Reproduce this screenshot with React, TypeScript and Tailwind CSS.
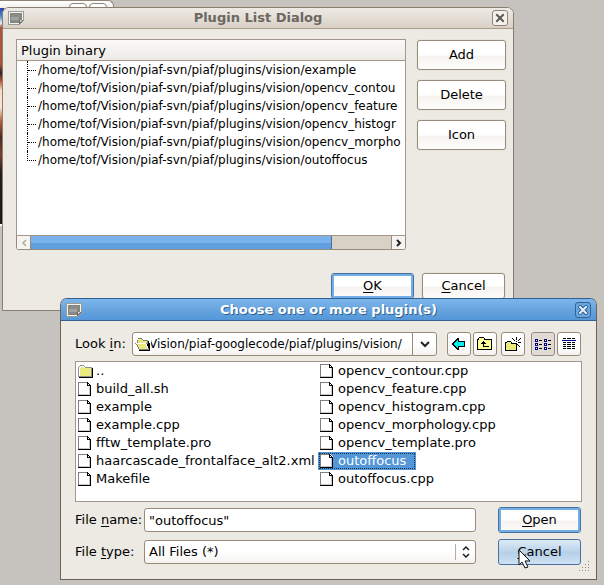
import type { ReactNode } from "react";

const plugins = [
  "example",
  "opencv_contou",
  "opencv_feature",
  "opencv_histogr",
  "opencv_morpho",
  "outoffocus",
];

const leftFiles = [
  "..",
  "build_all.sh",
  "example",
  "example.cpp",
  "fftw_template.pro",
  "haarcascade_frontalface_alt2.xml",
  "Makefile",
];

const rightFiles = [
  "opencv_contour.cpp",
  "opencv_feature.cpp",
  "opencv_histogram.cpp",
  "opencv_morphology.cpp",
  "opencv_template.pro",
  "outoffocus",
  "outoffocus.cpp",
];

function WindowIcon() {
  return (
    <svg width="16" height="14" viewBox="0 0 16 14" shapeRendering="crispEdges" className="shrink-0">
      <path d="M0 0H16V10H15V11H14V12H13V13H12V14H0Z" fill="#9c9a94" />
      <path d="M1 1H15V10H14V11H13V12H12V13H1Z" fill="#f4f4f0" />
      <path d="M2 2H14V9H11V12H2Z" fill="#83837f" />
      <path d="M3 3H13V6H3Z" fill="#8b8b87" />
      <path d="M3 6H11V9H3Z" fill="#a2a29e" />
      <path d="M3 9H10V11H3Z" fill="#8a8a86" />
      <path d="M11 9H15V10H14V11H13V12H12V13H11Z" fill="#6a6a64" />
      <path d="M12 9H14V10H13V11H12Z" fill="#d4d4d0" />
    </svg>
  );
}

function FileIcon() {
  return (
    <svg width="14" height="15" viewBox="0 0 14 15" shapeRendering="crispEdges" className="shrink-0">
      <path d="M1 0H10L13 3V14H1Z" fill="#fff" />
      <path d="M0 0H9V1H1V13H0Z" fill="#808080" />
      <path d="M9 0H10V1H11V2H12V3H13V14H0V13H12V4H9Z" fill="#000" />
      <path d="M10 2H11V3H10Z" fill="#fff" />
      <path d="M1 12H11V13H1ZM11 4H12V13H11Z" fill="#c8c8c8" />
    </svg>
  );
}

function FolderIcon() {
  return (
    <svg width="15" height="13" viewBox="0 0 15 13" shapeRendering="crispEdges" className="-mr-px shrink-0">
      <defs>
        <pattern id="folderDots" width="2" height="2" patternUnits="userSpaceOnUse">
          <rect width="2" height="2" fill="#dcdcdc" />
          <rect width="1" height="1" fill="#f8f820" />
          <rect x="1" y="1" width="1" height="1" fill="#f8f820" />
        </pattern>
      </defs>
      <path d="M2 0H6V1H7V2H14V12H0V2H1V1H2Z" fill="#909090" />
      <path d="M2 1H6V2H7V3H13V11H1V2H2Z" fill="#fff" />
      <path d="M3 2H6V3H13V11H2V3H3Z" fill="url(#folderDots)" />
      <path d="M14 3H15V13H1V12H14Z" fill="#000" />
    </svg>
  );
}

function OpenFolderIcon() {
  return (
    <svg width="16" height="13" viewBox="0 0 16 13" shapeRendering="crispEdges">
      <path d="M3 0H7V1H8V2H13V5H14V12H4V11H3V9H2V7H1V6H0V5H2V2H3Z" fill="#808080" />
      <path d="M3 1H7V2H8V3H12V5H3Z" fill="url(#folderDots)" />
      <path d="M1 5H11V6H12V8H13V11H4V9H3V7H2V6H1Z" fill="#fff" />
      <path d="M2 6H11V8H12V11H4V9H3V7H2Z" fill="url(#folderDots)" />
      <path d="M13 3H14V5H15V13H4V12H14V10H13V8H12V6H13Z" fill="#000" />
    </svg>
  );
}

function TitleBar({ title, active }: { title: string; active: boolean }) {
  return (
    <header
      className={
        active
          ? "flex h-[22px] items-center rounded-t-[6px] border-b border-[#33618f] bg-linear-to-b from-[#7db6ee] via-[#68a4de] via-50% to-[#5397d9] px-[5px]"
          : "flex h-[21px] items-center rounded-t-[6px] border-b border-[#a89c8a] bg-linear-to-b from-[#eeebe5] to-[#d8d0c5] px-[5px]"
      }
    >
      <WindowIcon />
      <h1
        className={
          active
            ? "flex-1 text-center text-[13px] leading-5 font-bold text-white [text-shadow:1px_1px_0_#33618f]"
            : "flex-1 text-center text-[13px] leading-5 font-bold text-[#6c6760]"
        }
      >
        {title}
      </h1>
      <button
        type="button"
        aria-label="Close"
        className={
          active
            ? "flex size-4 items-center justify-center rounded-[3px] border border-[#33618f] bg-[#69a6e2]"
            : "flex size-4 items-center justify-center rounded-[3px] border border-[#8f8576] bg-[#f4f2ee]"
        }
      >
        <svg width="10" height="10" viewBox="0 0 10 10">
          {active && <path d="M2 2L8 8M8 2L2 8" stroke="#2f5c8a" strokeWidth="4" strokeLinecap="square" />}
          <path
            d="M2 2L8 8M8 2L2 8"
            stroke={active ? "#e6f1fc" : "#5c5850"}
            strokeWidth="2"
            strokeLinecap="square"
          />
        </svg>
      </button>
    </header>
  );
}

function PushButton({
  children,
  tone = "normal",
  className = "",
}: {
  children: ReactNode;
  tone?: "normal" | "default" | "hover";
  className?: string;
}) {
  const tones = {
    normal:
      "border-[#978c7c] bg-linear-to-b from-white from-50% via-[#f5f3f0] via-55% to-[#fdfdfc] shadow-[0_0_1px_#b8afa2]",
    default:
      "border-[#48719c] bg-linear-to-b from-white from-50% via-[#f5f3f0] via-55% to-[#fdfdfc] shadow-[inset_0_0_0_2px_#72aeeb]",
    hover: "border-[#48719c] bg-linear-to-b from-[#dfebf6] from-0% via-[#b5d0e9] via-55% to-[#cfe2f3]",
  };
  return (
    <button type="button" className={`rounded-[3px] border text-center text-[13px] ${tones[tone]} ${className}`}>
      {children}
    </button>
  );
}

function Key({ children }: { children: ReactNode }) {
  return <u className="decoration-1 underline-offset-2">{children}</u>;
}

function ToolButton({ label, pressed, children }: { label: string; pressed?: boolean; children: ReactNode }) {
  return (
    <button
      type="button"
      aria-label={label}
      className={
        pressed
          ? "flex size-6 items-center justify-center rounded-[3px] border border-[#978c7c] bg-[#e0dad2]"
          : "flex size-6 items-center justify-center rounded-[3px] border border-[#978c7c] bg-linear-to-b from-white from-50% to-[#f5f3f0]"
      }
    >
      {children}
    </button>
  );
}

function BackIcon() {
  return (
    <svg width="14" height="12" viewBox="0 0 14 12" shapeRendering="crispEdges">
      <path d="M5 0H7V3H13V9H7V12H5V11H4V10H3V9H2V8H1V7H0V5H1V4H2V3H3V2H4V1H5Z" fill="#000" />
      <path d="M5 2H6V4H12V8H6V10H5V9H4V8H3V7H2V5H3V4H4V3H5Z" fill="#00f0f0" />
    </svg>
  );
}

function ParentIcon() {
  return (
    <svg width="16" height="14" viewBox="0 0 16 14" shapeRendering="crispEdges">
      <path d="M2 0H7V1H8V2H15V13H0V2H1V1H2Z" fill="#000" />
      <path d="M2 1H7V3H14V12H1V3H2Z" fill="#ffff99" />
      <path d="M6 4H7V5H8V6H9V7H7V9H12V10H6V7H4V6H5V5H6Z" fill="#000" />
    </svg>
  );
}

function NewFolderIcon() {
  return (
    <svg width="16" height="15" viewBox="0 0 16 15" shapeRendering="crispEdges">
      <path d="M2 4H6V5H7V6H12V14H0V5H2Z" fill="#000" />
      <path d="M2 5H6V7H11V13H1V6H2Z" fill="url(#folderDots)" />
      <path
        d="M11 0h1v3h-1zM7 1h1v1h-1zM8 2h1v1h-1zM9 3h1v1h-1zM15 1h1v1h-1zM14 2h1v1h-1zM13 3h1v1h-1zM11 4h1v1h-1zM13 5h3v1h-3zM12 7h1v1h-1zM13 8h1v1h-1zM14 9h1v1h-1z"
        fill="#000"
      />
    </svg>
  );
}

function ListIcon() {
  return (
    <svg width="16" height="11" viewBox="0 0 16 11" shapeRendering="crispEdges">
      {[0, 4, 8].map((y) => (
        <g key={y}>
          <path d={`M0 ${y}h3v3h-3zM9 ${y}h3v3h-3z`} fill="#000080" />
          <path d={`M1 ${y + 1}h1v1h-1zM10 ${y + 1}h1v1h-1z`} fill="#fff" />
          <path d={`M4 ${y + 1}h3v1h-3zM13 ${y + 1}h3v1h-3z`} fill="#000" />
        </g>
      ))}
    </svg>
  );
}

function DetailIcon() {
  return (
    <svg width="14" height="12" viewBox="0 0 14 12" shapeRendering="crispEdges">
      <path d="M1 0h3v1h-3zM5 0h4v1h-4zM10 0h3v1h-3z" fill="#000" />
      <path d="M0 2h14v1h-14z" fill="#0000a0" />
      {[4, 6, 8, 10].map((y) => (
        <path key={y} d={`M1 ${y}h3v1h-3zM5 ${y}h4v1h-4zM10 ${y}h3v1h-3z`} fill="#000" />
      ))}
    </svg>
  );
}

function FileRow({ name, selected }: { name: string; selected?: boolean }) {
  return (
    <li className="flex h-[18px]">
      <span
        className={
          selected
            ? "flex items-center gap-1 bg-[#5397d9] pr-2.5 pl-0.5 text-white outline-1 -outline-offset-2 outline-dotted outline-[#16304c]"
            : "flex items-center gap-1 pl-0.5"
        }
      >
        {name === ".." ? <FolderIcon /> : <FileIcon />}
        {name}
      </span>
    </li>
  );
}

export default function App() {
  return (
    <main className="relative h-screen overflow-hidden bg-[#c6c2bd] font-['DejaVu_Sans',sans-serif] text-[13px] leading-[18px] text-black">
      <div className="absolute top-0 left-0 flex h-[226px] w-[114px] flex-col">
        <div className="flex h-2 justify-end gap-0.5 rounded-tr-[6px] border-t border-r border-[#8f8576] bg-linear-to-b from-white to-[#f1efec] pt-0.5 pr-1.5">
          <span className="h-4 w-[18px] rounded-[4px] border border-[#8f8576] bg-white" />
          <span className="h-4 w-[18px] rounded-[4px] border border-[#8f8576] bg-white" />
        </div>
        <div className="w-1 flex-1 border-b-2 border-white bg-[linear-gradient(#2d3fa8_0%,#4f8fd0_4%,#e8eef4_7%,#b0563c_9%,#a8553c_26%,#2e2224_30%,#b85a3a_34%,#f6d9c6_38%,#fbe6d8_46%,#b8643f_52%,#4a2a24_60%,#7a4230_68%,#241c20_76%,#1c181c_100%)]" />
      </div>

      <section
        aria-label="Plugin List Dialog"
        className="absolute top-[7px] left-0.5 w-[512px] rounded-t-[7px] border border-[#8a7f6e] bg-[#edeae3]"
      >
        <TitleBar title="Plugin List Dialog" active={false} />
        <div className="flex gap-[11px] pt-2.5 pr-[7px] pl-[13px]">
          <div className="min-w-0 flex-1">
            <div className="h-[197px] overflow-hidden border border-[#a2978a] bg-white">
              <div className="h-[21px] border-b border-[#a2978a] bg-linear-to-b from-[#fbfaf9] to-[#edeae6] pl-1 leading-[21px]">
                Plugin binary
              </div>
              <ul className="text-[12px]">
                {plugins.map((name, i) => (
                  <li key={name} className="flex h-[18px] pl-2.5 whitespace-nowrap">
                    <span
                      className={
                        i === plugins.length - 1
                          ? "h-2.5 w-[9px] shrink-0 border-b border-l border-dotted border-black"
                          : "relative h-[18px] w-[9px] shrink-0 border-l border-dotted border-black after:absolute after:top-[9px] after:left-0 after:w-2 after:border-t after:border-dotted after:border-black"
                      }
                    />
                    <span className="pl-0.5">/home/tof/Vision/piaf-svn/piaf/plugins/vision/{name}</span>
                  </li>
                ))}
              </ul>
            </div>
            <div className="flex h-3.5 rounded-b-[3px] border border-t-0 border-[#978c7c] bg-[#d9d1c6]">
              <button
                type="button"
                aria-label="Scroll left"
                className="flex w-3.5 items-center justify-center border-r border-[#978c7c] bg-[#f6f4f1]"
              >
                <svg width="6" height="8" viewBox="0 0 6 8">
                  <path d="M5 1L2 4L5 7" fill="none" stroke="#b3a999" strokeWidth="1.5" />
                </svg>
              </button>
              <div className="w-[301px] border-r border-[#48719c] bg-linear-to-b from-[#7ab3ec] from-50% to-[#5f9fe0] to-55%" />
              <div className="flex-1" />
              <button
                type="button"
                aria-label="Scroll right"
                className="flex w-3.5 items-center justify-center border-l border-[#978c7c] bg-[#f6f4f1]"
              >
                <svg width="6" height="8" viewBox="0 0 6 8">
                  <path d="M1 1L4 4L1 7" fill="none" stroke="#222" strokeWidth="2" />
                </svg>
              </button>
            </div>
          </div>
          <div className="flex w-[89px] flex-col gap-2.5 pt-px">
            <PushButton className="h-[30px]">Add</PushButton>
            <PushButton className="h-[30px]">Delete</PushButton>
            <PushButton className="h-[30px]">Icon</PushButton>
          </div>
        </div>
        <div className="flex justify-end gap-2 px-2 pt-[23px] pb-[11px]">
          <PushButton tone="default" className="h-[26px] w-[83px]">
            <Key>O</Key>K
          </PushButton>
          <PushButton className="h-[26px] w-[83px]">
            <Key>C</Key>ancel
          </PushButton>
        </div>
      </section>

      <section
        aria-label="Choose one or more plugins"
        className="absolute top-[298px] left-[60px] w-[537px] rounded-t-[7px] border border-[#6d6355] border-t-[#33618f] bg-[#edeae3]"
      >
        <TitleBar title="Choose one or more plugin(s)" active />
        <div className="flex flex-col gap-[5px] px-3.5 pt-[11px] pb-3.5">
          <div className="flex items-center pr-px">
            <label htmlFor="look-in" className="w-[57px]">
              Look <Key>i</Key>n:
            </label>
            <div className="relative flex-1">
              <select
                id="look-in"
                className="block h-6 w-full appearance-none rounded-[3px] border border-[#978c7c] bg-linear-to-b from-white from-50% to-[#f5f3f0] pl-4 text-[12px] leading-[18px]"
              >
                <option>Vision/piaf-googlecode/piaf/plugins/vision/</option>
              </select>
              <span className="pointer-events-none absolute top-1 left-[3px] bg-white py-0.5">
                <OpenFolderIcon />
              </span>
              <span className="pointer-events-none absolute inset-y-0 right-0 flex w-[25px] items-center justify-center border-l border-[#978c7c]">
                <svg width="10" height="7" viewBox="0 0 10 7">
                  <path d="M1 1L5 5L9 1" fill="none" stroke="#222" strokeWidth="2" />
                </svg>
              </span>
            </div>
            <div className="flex pl-2.5">
              <div className="flex gap-0.5 pr-1">
                <ToolButton label="Back">
                  <BackIcon />
                </ToolButton>
                <ToolButton label="Parent folder">
                  <ParentIcon />
                </ToolButton>
              </div>
              <ToolButton label="New folder">
                <NewFolderIcon />
              </ToolButton>
              <div className="flex gap-0.5 pl-1.5">
                <ToolButton label="List view" pressed>
                  <ListIcon />
                </ToolButton>
                <ToolButton label="Detail view">
                  <DetailIcon />
                </ToolButton>
              </div>
            </div>
          </div>
          <div className="flex h-[141px] border border-[#a2978a] bg-white">
            <ul className="w-[242px]">
              {leftFiles.map((name) => (
                <FileRow key={name} name={name} />
              ))}
            </ul>
            <ul className="flex-1">
              {rightFiles.map((name) => (
                <FileRow key={name} name={name} selected={name === "outoffocus"} />
              ))}
            </ul>
          </div>
          <div className="grid grid-cols-[69px_1fr_83px] items-center gap-y-1.5 pr-px">
            <label htmlFor="file-name">
              File <Key>n</Key>ame:
            </label>
            <input
              id="file-name"
              defaultValue={'"outoffocus"'}
              className="mr-[22px] h-6 rounded-[3px] border border-[#978c7c] bg-white px-1"
            />
            <PushButton tone="default" className="h-[26px]">
              <Key>O</Key>pen
            </PushButton>
            <label htmlFor="file-type">
              File <Key>t</Key>ype:
            </label>
            <div className="relative mr-[22px]">
              <select
                id="file-type"
                className="block h-6 w-full appearance-none rounded-[3px] border border-[#978c7c] bg-linear-to-b from-white from-50% to-[#f5f3f0] px-1 leading-[18px]"
              >
                <option>All Files (*)</option>
              </select>
              <span className="pointer-events-none absolute inset-y-1 right-0 flex w-[21px] items-center justify-center border-l border-[#b5ab9e]">
                <svg width="8" height="12" viewBox="0 0 8 12">
                  <path d="M1 4L4 1L7 4M1 8L4 11L7 8" fill="none" stroke="#222" strokeWidth="1.5" />
                </svg>
              </span>
            </div>
            <PushButton tone="hover" className="h-[26px]">
              <Key>C</Key>ancel
            </PushButton>
          </div>
        </div>
        <svg width="12" height="12" viewBox="0 0 12 12" className="absolute right-1.5 bottom-1.5" shapeRendering="crispEdges">
          <path
            d="M10 0h1v1h-1zM7 3h1v1h-1zM10 3h1v1h-1zM4 6h1v1h-1zM7 6h1v1h-1zM10 6h1v1h-1zM1 9h1v1h-1zM4 9h1v1h-1zM7 9h1v1h-1zM10 9h1v1h-1z"
            fill="#9a8f80"
          />
        </svg>
      </section>

      <svg width="14" height="21" viewBox="0 0 14 21" className="pointer-events-none absolute top-[549px] left-[518px]">
        <path d="M1 1V16L4 13L7 19L10 18L7 12H12Z" fill="#fff" stroke="#111" />
      </svg>
    </main>
  );
}
